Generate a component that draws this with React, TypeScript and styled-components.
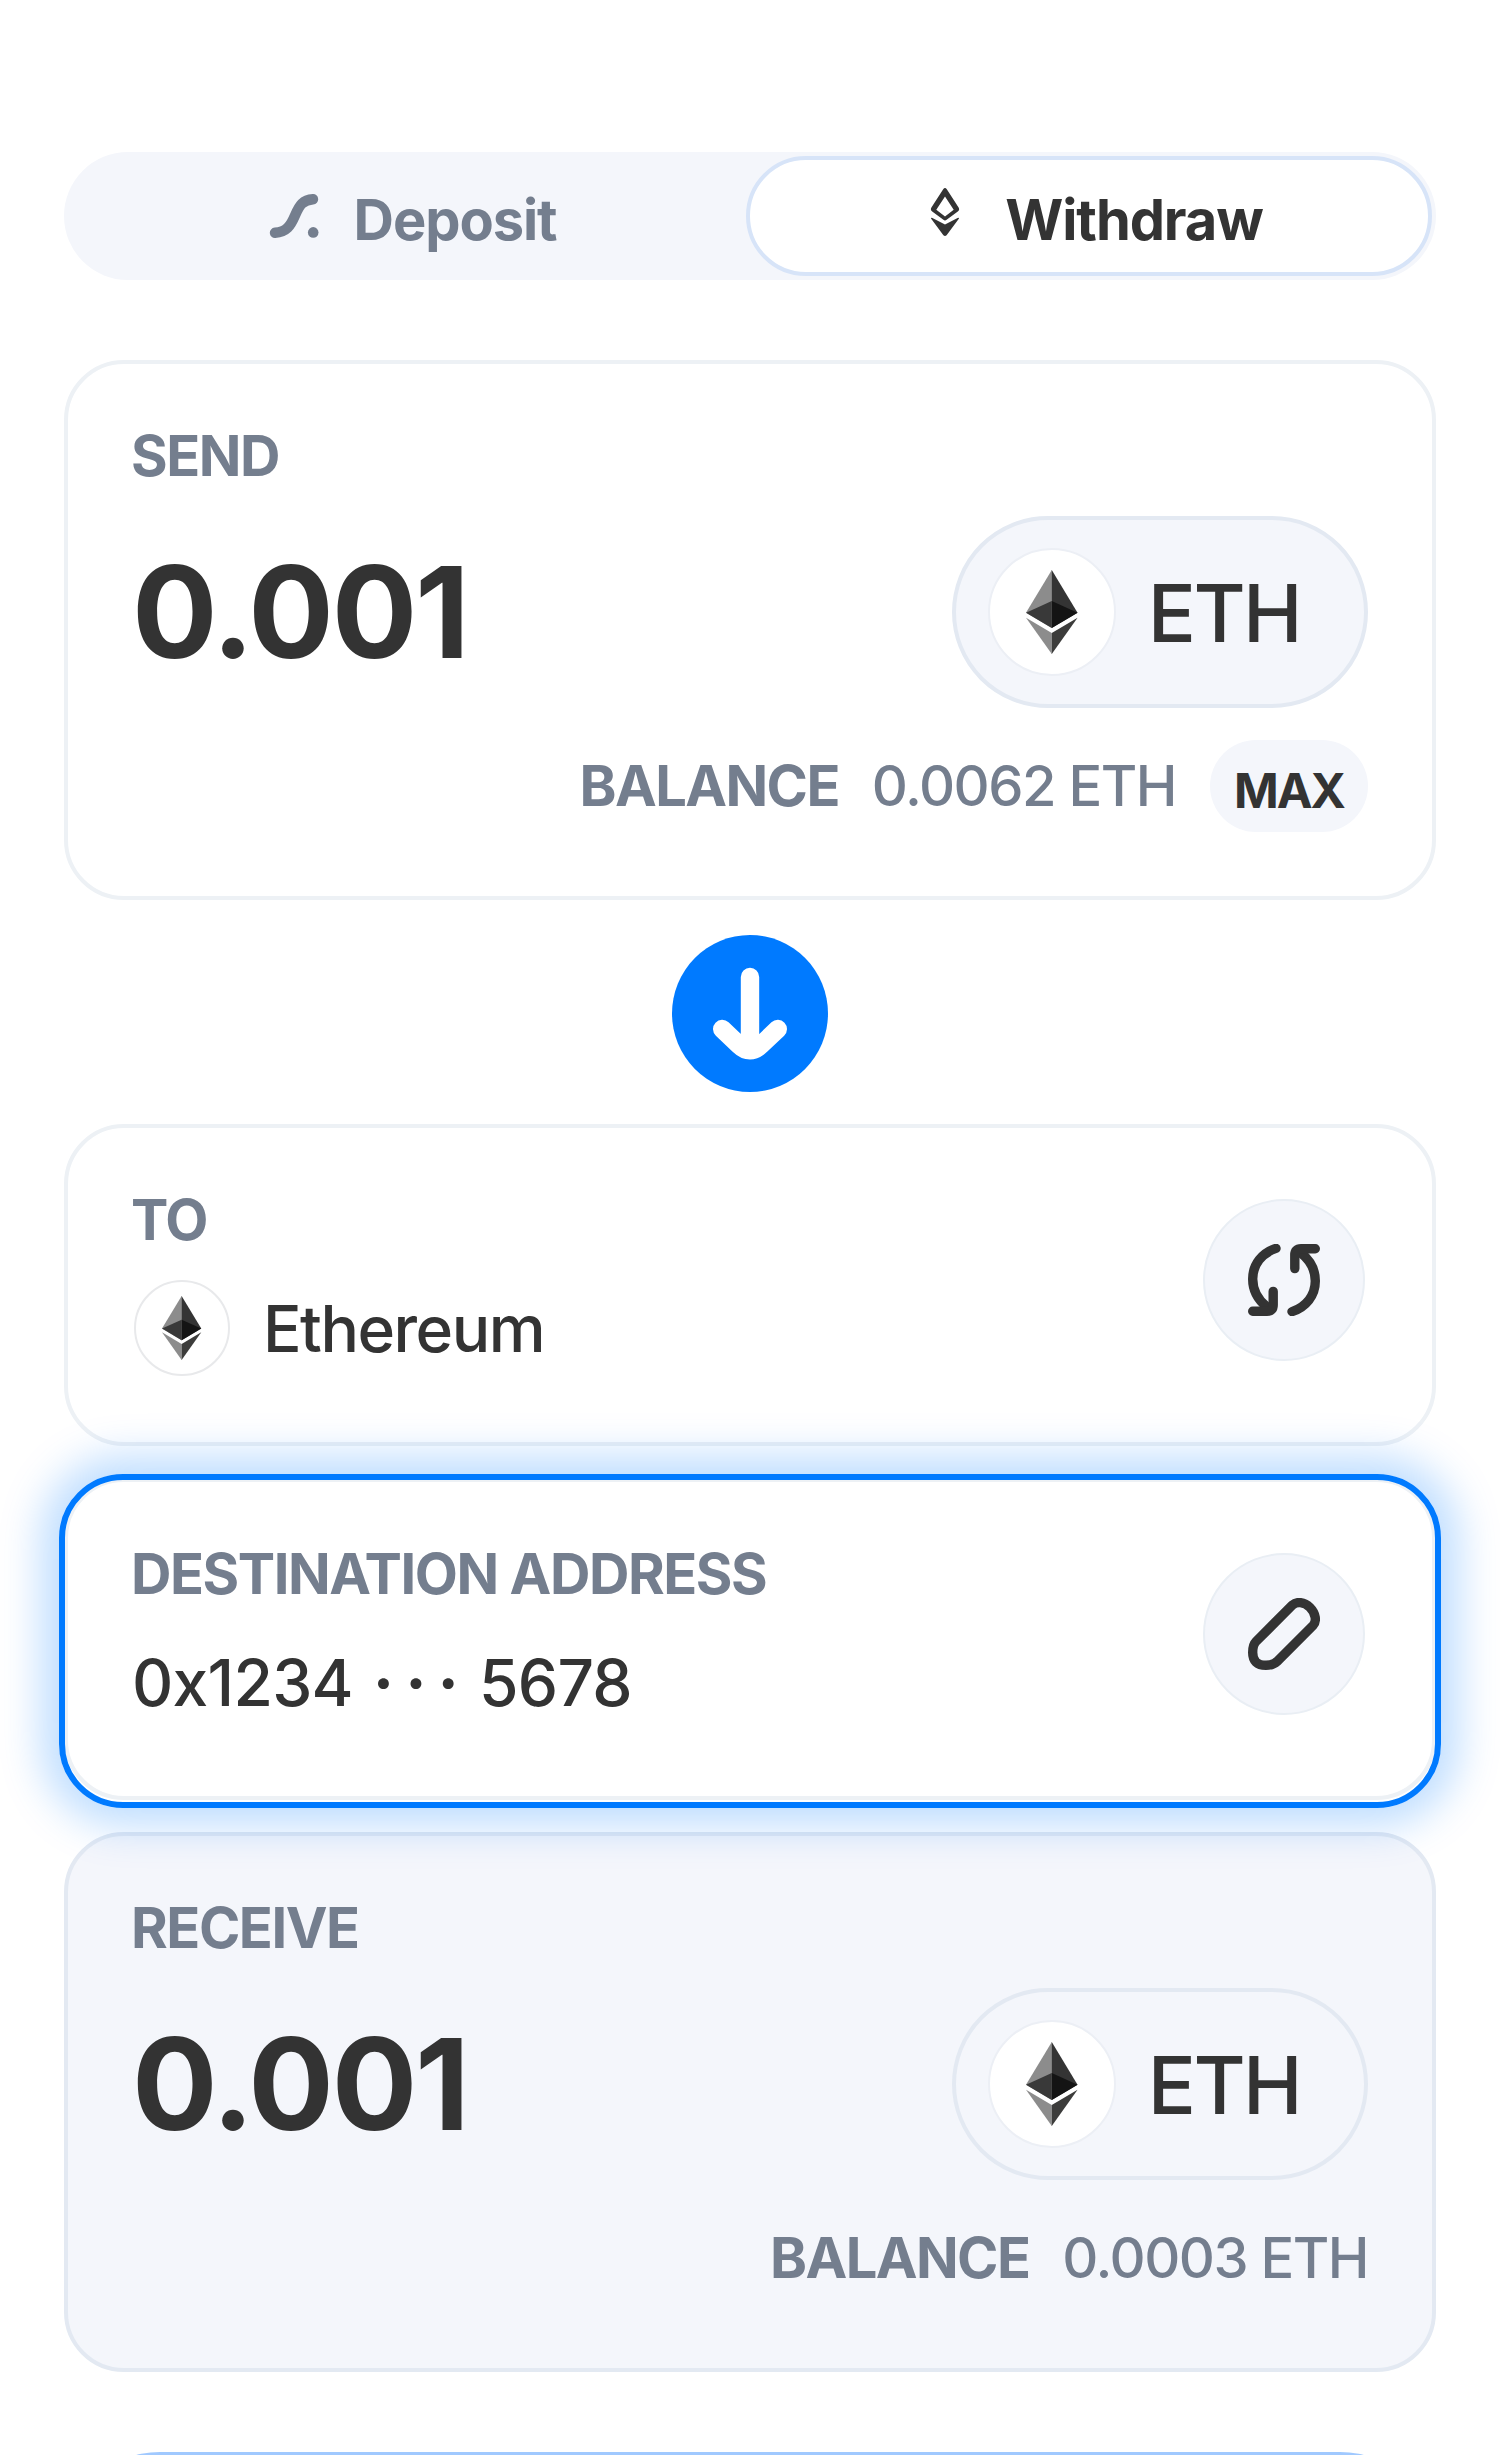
import React from "react";
import styled, { createGlobalStyle, css } from "styled-components";

const color = {
  ink: "#333333",
  muted: "#747e8e",
  surface: "#f4f6fb",
  line: "#edf1f5",
  surfaceLine: "#e3e9f2",
  blue: "#007aff",
};

const GlobalStyle = createGlobalStyle`
  * { box-sizing: border-box; }
  html { overflow: hidden; }
  body {
    margin: 0;
    background: #ffffff;
    color: ${color.ink};
    font-family: Inter, "Liberation Sans", sans-serif;
  }
  button { font: inherit; color: inherit; border: 0; margin: 0; padding: 0; }
  svg { display: block; }
`;

const Page = styled.main`
  height: 2455px;
  overflow: hidden;
  padding: 152px 64px 0;
  display: flex;
  flex-direction: column;
`;

const Tabs = styled.div`
  flex: none;
  display: flex;
  height: 128px;
  padding: 4px;
  border-radius: 64px;
  background: ${color.surface};
  margin-bottom: 80px;
`;

const Tab = styled.button<{ $active?: boolean }>`
  display: flex;
  align-items: center;
  justify-content: center;
  gap: 28px;
  font-size: 56px;
  line-height: 64px;
  font-weight: 700;
  letter-spacing: -1.1px;
  border-radius: 60px;
  ${({ $active }) =>
    $active
      ? css`
          flex: 0 0 686px;
          padding-right: 2px;
          color: ${color.ink};
          background: #ffffff;
          border: 4px solid #d7e4f8;
        `
      : css`
          flex: 1;
          padding-left: 4px;
          color: ${color.muted};
          background: transparent;
        `}
`;

const TabIcon = styled.span<{ $top: number }>`
  width: 64px;
  height: 64px;
  display: flex;
  justify-content: center;
  padding-top: ${({ $top }) => $top}px;
`;

const TabLabel = styled.span`
  padding-top: 8px;
`;

const Card = styled.section<{ $filled?: boolean }>`
  flex: none;
  position: relative;
  height: 540px;
  padding: 64px;
  border: 4px solid ${({ $filled }) => ($filled ? color.surfaceLine : color.line)};
  border-radius: 60px;
  background: ${({ $filled }) => ($filled ? color.surface : "#ffffff")};
  display: flex;
  flex-direction: column;
  gap: 32px;
`;

const RowCard = styled(Card)`
  height: 322px;
  flex-direction: row;
  justify-content: space-between;
  margin-bottom: 32px;
`;

const FocusRing = styled.div`
  position: absolute;
  z-index: 2;
  inset: -8px -9px -12px;
  border: 6px solid ${color.blue};
  border-radius: 64px;
  box-shadow: 0 0 40px 18px rgba(0, 122, 255, 0.25);
  pointer-events: none;
`;

const Column = styled.div`
  display: flex;
  flex-direction: column;
  gap: 32px;
`;

const Label = styled.h2`
  margin: 0 0 0 -1px;
  font-size: 56px;
  line-height: 56px;
  font-weight: 700;
  letter-spacing: -1.45px;
  color: ${color.muted};
`;

const AmountRow = styled.div`
  display: flex;
  justify-content: space-between;
  align-items: center;
  height: 192px;
`;

const Amount = styled.div`
  font-size: 127px;
  line-height: 128px;
  font-weight: 700;
  letter-spacing: -2.2px;
`;

const TokenButton = styled.button`
  display: flex;
  align-items: center;
  gap: 32px;
  height: 192px;
  padding: 0 64px 0 32px;
  border: 4px solid ${color.surfaceLine};
  border-radius: 96px;
  background: ${color.surface};
`;

const TokenName = styled.span`
  padding-top: 2px;
  font-size: 80px;
  line-height: 96px;
  font-weight: 500;
  letter-spacing: -2.6px;
`;

const Coin = styled.span<{ $size: number; $line: string }>`
  flex: none;
  display: flex;
  align-items: center;
  justify-content: center;
  width: ${({ $size }) => $size}px;
  height: ${({ $size }) => $size}px;
  border: 2px solid ${({ $line }) => $line};
  border-radius: 50%;
  background: #ffffff;
`;

const BalanceRow = styled.div`
  display: flex;
  justify-content: flex-end;
  align-items: center;
  height: 92px;
  font-size: 56px;
  line-height: 92px;
  color: ${color.muted};
`;

const BalanceName = styled.span`
  font-weight: 700;
  letter-spacing: -1.6px;
  margin-right: 33px;
`;

const BalanceValue = styled.span`
  font-weight: 500;
  letter-spacing: -1.5px;
`;

const MaxButton = styled.button`
  width: 158px;
  height: 92px;
  margin-left: 34px;
  padding-top: 10px;
  border-radius: 46px;
  background: ${color.surface};
  color: ${color.ink};
  font-size: 48px;
  line-height: 60px;
  font-weight: 700;
  letter-spacing: -2px;
`;

const ArrowSlot = styled.div`
  flex: none;
  height: 224px;
  display: flex;
  align-items: center;
  justify-content: center;
  padding-top: 2px;
`;

const ArrowDisc = styled.div`
  width: 156px;
  height: 157px;
  border-radius: 50%;
  background: ${color.blue};
`;

const ValueRow = styled.div`
  display: flex;
  align-items: center;
  gap: 33px;
  height: 96px;
  font-size: 64px;
  line-height: 96px;
  font-weight: 500;
`;

const NetworkRow = styled(ValueRow)`
  padding-left: 2px;
`;

const NetworkName = styled.span`
  padding-top: 2px;
  letter-spacing: -1.5px;
`;

const Address = styled.span`
  display: flex;
  padding-top: 2px;
  letter-spacing: -0.7px;
`;

const Dots = styled.span`
  width: 126px;
  text-align: center;
  font-weight: 700;
  letter-spacing: 11px;
  padding-left: 11px;
`;

const IconButton = styled.button`
  width: 162px;
  height: 162px;
  margin: 7px 3px 0 0;
  display: flex;
  align-items: center;
  justify-content: center;
  border: 2px solid #e9eef4;
  border-radius: 50%;
  background: ${color.surface};
`;

const SubmitButton = styled.button`
  flex: none;
  height: 192px;
  margin-top: 80px;
  border-radius: 96px;
  background: #a0c9ff;
`;

const EthDiamond = ({ height }: { height: number }) => (
  <svg width={(height * 256) / 417} height={height} viewBox="0 0 256 417">
    <path fill="#343434" d="M127.96 0l-2.8 9.5v275.67l2.8 2.79 127.96-75.64z" />
    <path fill="#8c8c8c" d="M127.96 0L0 212.32l127.96 75.64V154.16z" />
    <path fill="#3c3c3b" d="M127.96 312.19l-1.57 1.92v98.2l1.57 4.6L256 236.59z" />
    <path fill="#8c8c8c" d="M127.96 416.9V312.19L0 236.59z" />
    <path fill="#141414" d="M127.96 287.96l127.96-75.64-127.96-58.16z" />
    <path fill="#393939" d="M0 212.32l127.96 75.64V154.16z" />
  </svg>
);

const CurveIcon = () => (
  <svg width="50" height="44" viewBox="0 0 50 44">
    <path
      d="M6 38.8C17.5 38 21.5 32 26 21.5S34 5.8 44 5.2"
      fill="none"
      stroke="currentColor"
      strokeWidth="10.4"
      strokeLinecap="round"
    />
    <circle cx="44.2" cy="38.4" r="5.3" fill="currentColor" />
  </svg>
);

const EthOutlineIcon = () => (
  <svg width="30" height="48" viewBox="0 0 30 48" fill="currentColor">
    <path
      fillRule="evenodd"
      d="M13.2 1.3Q15 -1.3 16.8 1.3L28.6 19.4Q30 21.8 27.8 23.6L16.6 31.8Q15 33 13.4 31.8L2.2 23.6Q0 21.8 1.4 19.4ZM15 8.4L6.3 21.8 15 28.4 23.7 21.8Z"
    />
    <path d="M1 30.6Q0.9 29.2 2.4 30L15 36.6 27.6 30Q29.1 29.2 29 30.6L16.6 47.2Q15 48.8 13.4 47.2Z" />
  </svg>
);

const DownArrow = () => (
  <svg width="156" height="157" viewBox="672 934 156 157">
    <path
      d="M750 976V1048M722.2 1028L739 1044Q750 1054.6 761 1044L777.8 1028"
      fill="none"
      stroke="#fff"
      strokeWidth="18.4"
      strokeLinecap="round"
      strokeLinejoin="round"
    />
  </svg>
);

const SwitchIcon = () => (
  <svg width="72" height="72" viewBox="0 0 72 72" fill="none" stroke={color.ink} strokeWidth="9.4" strokeLinecap="round" strokeLinejoin="round">
    <path d="M28 4.4C14 9 4.7 20.5 4.7 35 4.7 46 9.5 55.5 19 63" />
    <path d="M4.7 67.3H19Q25.2 67.3 25.2 61V47.4" />
    <path d="M44 67.6C58 63 67.3 51.5 67.3 37 67.3 26 62.5 16.5 53 9" />
    <path d="M67.3 4.7H53Q46.8 4.7 46.8 11V24.6" />
  </svg>
);

const PencilIcon = () => (
  <svg width="72" height="72" viewBox="0 0 72 72" fill="none" stroke={color.ink} strokeWidth="9.4">
    <path d="M8 43.5L44.5 7C48.5 3.4 56 3.5 62 9.5S68.8 23.5 65 27.5L29 63.5C26 66.3 22 67.3 18 67.3 9 67.3 4.7 63 4.7 54.5 4.7 50 5.5 46 8 43.5Z" />
  </svg>
);

interface AssetCardProps {
  title: string;
  amount: string;
  balance: string;
  filled?: boolean;
  withMax?: boolean;
}

const AssetCard = ({ title, amount, balance, filled, withMax }: AssetCardProps) => (
  <Card $filled={filled}>
    <Label>{title}</Label>
    <AmountRow>
      <Amount>{amount}</Amount>
      <TokenButton>
        <Coin $size={128} $line="#eceff5">
          <EthDiamond height={84} />
        </Coin>
        <TokenName>ETH</TokenName>
      </TokenButton>
    </AmountRow>
    <BalanceRow>
      <BalanceName>BALANCE</BalanceName>
      <BalanceValue>{balance}</BalanceValue>
      {withMax && <MaxButton>MAX</MaxButton>}
    </BalanceRow>
  </Card>
);

export default function App() {
  return (
    <>
      <GlobalStyle />
      <Page>
        <Tabs>
          <Tab>
            <TabIcon $top={10}>
              <CurveIcon />
            </TabIcon>
            <TabLabel>Deposit</TabLabel>
          </Tab>
          <Tab $active>
            <TabIcon $top={4}>
              <EthOutlineIcon />
            </TabIcon>
            <TabLabel>Withdraw</TabLabel>
          </Tab>
        </Tabs>

        <AssetCard title="SEND" amount="0.001" balance="0.0062 ETH" withMax />

        <ArrowSlot>
          <ArrowDisc>
            <DownArrow />
          </ArrowDisc>
        </ArrowSlot>

        <RowCard>
          <Column>
            <Label>TO</Label>
            <NetworkRow>
              <Coin $size={96} $line="#e8e9eb">
                <EthDiamond height={64} />
              </Coin>
              <NetworkName>Ethereum</NetworkName>
            </NetworkRow>
          </Column>
          <IconButton aria-label="Switch network">
            <SwitchIcon />
          </IconButton>
        </RowCard>

        <RowCard>
          <Column>
            <Label>DESTINATION ADDRESS</Label>
            <ValueRow>
              <Address>
                0x1234<Dots>···</Dots>5678
              </Address>
            </ValueRow>
          </Column>
          <IconButton aria-label="Edit address">
            <PencilIcon />
          </IconButton>
          <FocusRing />
        </RowCard>

        <AssetCard title="RECEIVE" amount="0.001" balance="0.0003 ETH" filled />

        <SubmitButton aria-label="Continue" />
      </Page>
    </>
  );
}
